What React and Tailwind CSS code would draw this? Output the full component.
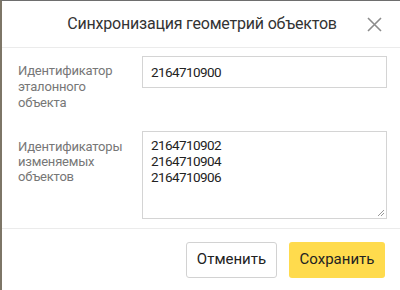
export default function App() {
  return (
    <div
      className="w-[400px] h-[290px] bg-white border-t border-t-[#6e6e6e] border-l-2 border-l-[#7d7667] flex flex-col text-[#222]"
      style={{ fontFamily: 'Roboto, "Noto Sans", sans-serif' }}
    >
      <div className="h-[47px] flex items-center relative border-b border-[#ebebeb]">
        <div className="w-full text-center text-[16px] tracking-[-0.2px] text-[#333] pl-[2px]">
          Синхронизация геометрий объектов
        </div>
        <button className="absolute right-[18px] top-[15px] w-[16px] h-[16px] flex items-center justify-center">
          <svg width="15" height="15" viewBox="0 0 15 15">
            <path d="M1 1L14 14M14 1L1 14" stroke="#8c8c8c" strokeWidth="1.6" />
          </svg>
        </button>
      </div>

      <div className="flex-1 flex flex-col pl-[16px] pr-[13px] pt-[8px] gap-[20px] border-b border-[#ebebeb]">
        <div className="flex">
          <div className="w-[124px] pt-[7px] text-[13px] leading-[16px] tracking-[-0.2px] text-[#777]">
            Идентификатор
            <br />
            эталонного
            <br />
            объекта
          </div>
          <div className="flex-1 h-[32px] border border-[#d4d4d4] px-[8px] flex items-center text-[13.5px] tracking-[-0.6px]">
            2164710900
          </div>
        </div>
        <div className="flex">
          <div className="w-[124px] pt-[8px] text-[13px] leading-[15px] tracking-[-0.2px] text-[#777]">
            Идентификаторы
            <br />
            изменяемых
            <br />
            объектов
          </div>
          <div className="flex-1 h-[88px] border border-[#d4d4d4] px-[8px] pt-[5px] text-[13.5px] leading-[16px] tracking-[-0.6px] relative">
            2164710902
            <br />
            2164710904
            <br />
            2164710906
            <svg className="absolute right-[1px] bottom-[1px]" width="9" height="9" viewBox="0 0 9 9">
              <path d="M8 2L2 8M8 5L5 8" stroke="#999" strokeWidth="1" />
            </svg>
          </div>
        </div>
      </div>

      <div className="h-[61px] flex items-center justify-end gap-[12px] pr-[15px]">
        <button className="w-[91px] h-[36px] border border-[#d2d2d2] rounded-[3px] bg-white text-[15px] text-[#222]">
          Отменить
        </button>
        <button className="w-[96px] h-[36px] rounded-[3px] bg-[#ffdb4d] text-[15px] text-[#222]">
          Сохранить
        </button>
      </div>
    </div>
  );
}
